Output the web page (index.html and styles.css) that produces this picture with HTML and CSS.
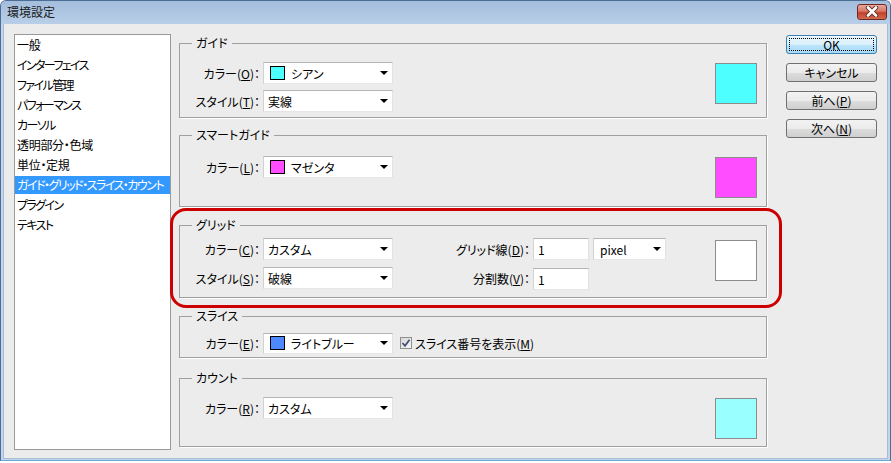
FILE: index.html
```html
<!DOCTYPE html>
<html lang="ja">
<head>
<meta charset="utf-8">
<title>環境設定</title>
<link rel="stylesheet" href="styles.css">
</head>
<body>
<div class="window">
  <div class="titlebar">
    <span class="title">環境設定</span>
    <div class="close">
      <svg width="16" height="11" viewBox="0 0 16 11">
        <path d="M4 1.5 L12 9.5 M12 1.5 L4 9.5" stroke="#5a2a22" stroke-width="4.4" stroke-linecap="round"/>
        <path d="M4 1.5 L12 9.5 M12 1.5 L4 9.5" stroke="#fff" stroke-width="2.6" stroke-linecap="round"/>
      </svg>
    </div>
  </div>
  <div class="client">
    <ul class="list">
      <li class="kanji">一般</li>
      <li>インターフェイス</li>
      <li>ファイル管理</li>
      <li>パフォーマンス</li>
      <li>カーソル</li>
      <li class="kanji">透明部分・色域</li>
      <li class="kanji">単位・定規</li>
      <li class="sel">ガイド・グリッド・スライス・カウント</li>
      <li>プラグイン</li>
      <li>テキスト</li>
    </ul>
    <div class="main">
      <div class="group g-guide">
        <span class="legend">ガイド</span>
        <div class="fields">
          <div class="row">
            <span class="lbl">カラー(<u>O</u>)：</span>
            <div class="select"><span class="sw cyan"></span><span>シアン</span><i class="arrow"></i></div>
          </div>
          <div class="row">
            <span class="lbl">スタイル(<u>T</u>)：</span>
            <div class="select"><span>実線</span><i class="arrow"></i></div>
          </div>
        </div>
        <div class="swatch cyan"></div>
      </div>

      <div class="group g-smart">
        <span class="legend">スマートガイド</span>
        <div class="fields">
          <div class="row">
            <span class="lbl">カラー(<u>L</u>)：</span>
            <div class="select"><span class="sw magenta"></span><span>マゼンタ</span><i class="arrow"></i></div>
          </div>
        </div>
        <div class="swatch magenta"></div>
      </div>

      <div class="group g-grid">
        <span class="legend">グリッド</span>
        <div class="fields">
          <div class="row">
            <span class="lbl">カラー(<u>C</u>)：</span>
            <div class="select"><span>カスタム</span><i class="arrow"></i></div>
            <span class="lbl2">グリッド線(<u>D</u>)：</span>
            <div class="input">1</div>
            <div class="select unit"><span>pixel</span><i class="arrow"></i></div>
          </div>
          <div class="row row2">
            <span class="lbl">スタイル(<u>S</u>)：</span>
            <div class="select"><span>破線</span><i class="arrow"></i></div>
            <span class="lbl2">分割数(<u>V</u>)：</span>
            <div class="input low">1</div>
          </div>
        </div>
        <div class="swatch white"></div>
      </div>

      <div class="group g-slice">
        <span class="legend">スライス</span>
        <div class="fields">
          <div class="row">
            <span class="lbl">カラー(<u>E</u>)：</span>
            <div class="select short"><span class="sw blue"></span><span>ライトブルー</span><i class="arrow"></i></div>
            <span class="check">
              <svg width="10" height="10" viewBox="0 0 10 10"><path d="M1.5 5 L4 7.8 L8.5 1.8" fill="none" stroke="#44527a" stroke-width="1.8"/></svg>
            </span>
            <span class="checklbl">スライス番号を表示(<u>M</u>)</span>
          </div>
        </div>
      </div>

      <div class="group g-count">
        <span class="legend">カウント</span>
        <div class="fields">
          <div class="row">
            <span class="lbl">カラー(<u>R</u>)：</span>
            <div class="select"><span>カスタム</span><i class="arrow"></i></div>
          </div>
        </div>
        <div class="swatch lightcyan"></div>
      </div>

      <div class="highlight"></div>
    </div>
    <div class="buttons">
      <div class="btn default"><span class="focus">OK</span></div>
      <div class="btn">キャンセル</div>
      <div class="btn">前へ(<u>P</u>)</div>
      <div class="btn">次へ(<u>N</u>)</div>
    </div>
  </div>
</div>
</body>
</html>
```

FILE: styles.css
```css
html, body {
  margin: 0;
  padding: 0;
  background: #ffffff;
}
body {
  width: 891px;
  height: 463px;
  overflow: hidden;
  font-family: "Noto Sans CJK JP", "Noto Sans", sans-serif;
  font-size: 12px;
  color: #000;
  font-feature-settings: "palt";
}
u { text-decoration: underline; text-underline-offset: 1px; }

.window {
  width: 891px;
  height: 461px;
  box-sizing: border-box;
  border: 1px solid #4d6d94;
  border-radius: 6px 6px 0 0;
  background: #c3d7ec;
  border-bottom-color: #6aa6d6;
}
.titlebar {
  height: 23px;
  display: flex;
  align-items: center;
  padding-left: 6px;
  background: linear-gradient(#a3bddc, #b9cfe8);
  border-radius: 5px 5px 0 0;
}
.title {
  font-size: 12px;
  color: #1a1a1a;
  margin-top: -2px;
}
.close {
  margin-left: auto;
  margin-right: 3px;
  margin-top: -2px;
  width: 30px;
  height: 16px;
  box-sizing: border-box;
  border: 1px solid #6d2a20;
  border-radius: 3px;
  background: linear-gradient(#e8a89b 0%, #d77565 45%, #c2402c 55%, #d26a4f 100%);
  display: flex;
  align-items: center;
  justify-content: center;
}
.client {
  display: flex;
  align-items: flex-start;
  height: 435px;
  margin: 0 2px;
  padding: 10px 0 0 10px;
  box-sizing: border-box;
  background: #ececec;
  border-left: 1px solid #a9bcd3;
  border-right: 1px solid #a9bcd3;
  border-bottom: 1px solid #a9bcd3;
}

.list {
  list-style: none;
  margin: 0;
  padding: 1px 0 0 0;
  width: 157px;
  height: 416px;
  box-sizing: border-box;
  background: #fff;
  border: 1px solid #9a9a9a;
  flex-shrink: 0;
}
.list li {
  height: 18px;
  line-height: 18px;
  margin-bottom: 2px;
  padding-left: 2px;
  white-space: nowrap;
  letter-spacing: -1.6px;
}
.list li.kanji {
  letter-spacing: -0.3px;
}
.list li.sel {
  background: #3399ff;
  color: #fff;
  letter-spacing: -1.5px;
}

.main {
  position: relative;
  margin-left: 8px;
  width: 588px;
  padding-top: 9px;
  flex-shrink: 0;
}
.group {
  position: relative;
  box-sizing: border-box;
  border: 1px solid #a0a0a0;
  box-shadow: 1px 1px 0 #ffffff;
  display: flex;
  align-items: flex-start;
  padding-right: 9px;
}
.legend {
  position: absolute;
  top: -9px;
  left: 12px;
  padding: 0 4px;
  background: #ececec;
  line-height: 16px;
}
.g-guide { height: 75px; padding-top: 18px; }
.g-smart { height: 72px; padding-top: 20px; margin-top: 17px; }
.g-grid  { height: 73px; padding-top: 12px; margin-top: 18px; }
.g-slice { height: 42px; padding-top: 15px; margin-top: 18px; }
.g-count { height: 69px; padding-top: 18px; margin-top: 20px; }

.fields {
  display: flex;
  flex-direction: column;
  gap: 6px;
}
.g-grid .fields { gap: 7px; }
.row {
  display: flex;
  align-items: center;
  height: 22px;
}
.lbl {
  width: 80px;
  text-align: right;
  margin-right: 3px;
  white-space: nowrap;
}
.lbl2 {
  width: 137px;
  text-align: right;
  margin-right: 3px;
  white-space: nowrap;
}
.select {
  display: flex;
  align-items: center;
  width: 130px;
  height: 22px;
  box-sizing: border-box;
  background: #fff;
  border: 1px solid;
  border-color: #b4b4b4 #e2e2e2 #e6e6e6 #d2d2d2;
  padding-left: 4px;
}
.select.short { height: 21px; }
.select.unit {
  width: 73px;
  margin-left: 4px;
  padding-left: 6px;
}
.select .sw {
  width: 15px;
  height: 14px;
  box-sizing: border-box;
  border: 1px solid #000;
  margin: 0 6px 0 2px;
}
.arrow {
  margin-left: auto;
  margin-right: 4px;
  width: 0;
  height: 0;
  border-top: 4px solid #000;
  border-left: 4px solid transparent;
  border-right: 4px solid transparent;
}
.input {
  display: flex;
  align-items: center;
  width: 56px;
  height: 22px;
  box-sizing: border-box;
  background: #fff;
  border: 1px solid;
  border-color: #b4b4b4 #e2e2e2 #e6e6e6 #d2d2d2;
  padding-left: 4px;
}
.input.low { margin-top: 2px; }

.swatch {
  margin-left: auto;
  width: 42px;
  height: 41px;
  box-sizing: border-box;
  border: 1px solid #8c8c8c;
  margin-top: 1px;
}
.g-grid .swatch { margin-top: 2px; }

.cyan { background: #4dffff; }
.magenta { background: #ff4dff; }
.blue { background: #4d88ff; }
.white { background: #ffffff; }
.lightcyan { background: #99ffff; }

.check {
  margin-left: 7px;
  width: 12px;
  height: 12px;
  box-sizing: border-box;
  border: 1px solid #8f8f8f;
  background: linear-gradient(135deg, #d8d8d8, #f6f6f6);
  display: flex;
  align-items: center;
  justify-content: center;
}
.checklbl {
  margin-left: 3px;
  white-space: nowrap;
}

.highlight {
  position: absolute;
  left: -9px;
  top: 174px;
  width: 612px;
  height: 100px;
  box-sizing: border-box;
  border: 3px solid #cc0000;
  border-radius: 16px;
  pointer-events: none;
}

.buttons {
  margin-left: 19px;
  margin-top: 1px;
  display: flex;
  flex-direction: column;
  gap: 9px;
}
.btn {
  width: 91px;
  height: 19px;
  box-sizing: border-box;
  border: 1px solid #707070;
  border-radius: 3px;
  background: linear-gradient(#f2f2f2 0%, #ebebeb 50%, #dddddd 51%, #cfcfcf 100%);
  display: flex;
  align-items: center;
  justify-content: center;
  line-height: 14px;
}
.btn.default {
  border-color: #3c7fb1;
  padding: 2px;
  background: linear-gradient(#eaf6fd 0%, #d9f0fc 50%, #bee6fd 51%, #a7d9f5 100%);
}
.btn .focus {
  flex: 1;
  align-self: stretch;
  border: 1px dotted #000;
  display: flex;
  align-items: center;
  justify-content: center;
}
```
